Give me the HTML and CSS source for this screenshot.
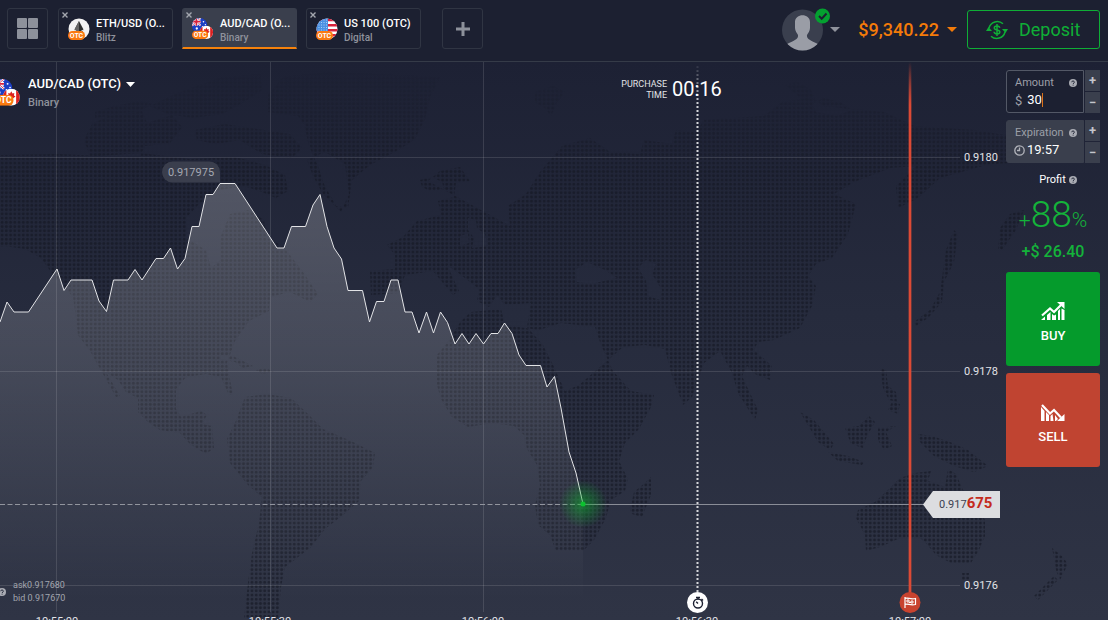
FILE: index.html
```html
<!DOCTYPE html>
<html lang="en">
<head>
<meta charset="utf-8">
<title>AUD/CAD (OTC)</title>
<link rel="stylesheet" href="styles.css">
</head>
<body>
<svg class="defs" width="0" height="0" aria-hidden="true">
  <defs>
    <clipPath id="round"><circle cx="11" cy="11" r="10.5"/></clipPath>
    <clipPath id="auClip"><circle cx="8" cy="8" r="8"/></clipPath>
    <clipPath id="caClip"><circle cx="15" cy="15" r="7"/></clipPath>
    <symbol id="badge" viewBox="0 0 17 9">
      <rect width="17" height="9" rx="4.5" fill="#fb7a10"/>
      <text x="8.5" y="7" text-anchor="middle" class="badge-text">OTC</text>
    </symbol>
    <symbol id="audcad" viewBox="0 0 23 23">
      <g clip-path="url(#auClip)">
        <rect width="16" height="16" fill="#1c3fc4"/>
        <path d="M0 0l9 8M9 0L0 8" stroke="#fff" stroke-width="2"/>
        <path d="M4.500 0v8M0 4h9" stroke="#fff" stroke-width="3"/>
        <path d="M4.500 0v8M0 4h9" stroke="#d8223c" stroke-width="1.600"/>
        <path d="M0 0l9 8M9 0L0 8" stroke="#d8223c" stroke-width=".7"/>
        <circle cx="12" cy="4" r=".8" fill="#fff"/><circle cx="14" cy="7" r=".7" fill="#fff"/><circle cx="5" cy="11" r="1.200" fill="#fff"/><circle cx="11" cy="9" r=".7" fill="#fff"/>
      </g>
      <g clip-path="url(#caClip)">
        <rect x="8" y="8" width="14" height="14" fill="#fff"/>
        <path d="M8 8h3v14H8zM19 8h3v14h-3z" fill="#dd2020"/>
        <path d="M15 10l1 2 1.500-.5-.3 2 1.300.8-2.500 2h-2l-2.500-2 1.300-.8-.3-2L14 12z" fill="#dd2020"/>
      </g>
      <use href="#badge" x="0" y="13" width="17" height="9"/>
    </symbol>
    <symbol id="help" viewBox="0 0 8 8">
      <circle cx="4" cy="4" r="4" fill="#a9abb3"/>
      <path d="M2.700 3.200c0-1.700 2.700-1.600 2.700 0 0 .8-1.300.9-1.300 1.800M4.100 5.700v.9" fill="none" stroke="#262b3c" stroke-width="1"/>
    </symbol>
  </defs>
</svg>

<header class="topbar">
  <button class="square" aria-label="Layout">
    <svg width="21" height="21" viewBox="0 0 21 21" fill="#8d919b"><rect width="10" height="10" rx="1"/><rect x="11" width="10" height="10" rx="1"/><rect y="11" width="10" height="10" rx="1"/><rect x="11" y="11" width="10" height="10" rx="1"/></svg>
  </button>
  <nav class="tabs">
    <div class="tab">
      <button class="tab-main">
        <svg width="22" height="22" viewBox="0 0 22 22"><circle cx="11" cy="11" r="10.5" fill="#f3f3f3"/><path d="M11 3l4.500 8.500L11 14l-4.500-2.500z" fill="#2f3030"/><path d="M11 3v11l-4.500-2.500z" fill="#666"/><path d="M6.500 12.500L11 15l4.500-2.500L11 19z" fill="#444"/><use href="#badge" x="0" y="13" width="17" height="9"/></svg>
        <span class="tab-label"><span class="tab-name">ETH/USD (O...</span><span class="tab-kind">Blitz</span></span>
      </button>
      <button class="close" aria-label="Close ETH/USD"><svg width="6" height="6" viewBox="0 0 6 6"><path d="M.5.5l5 5M5.500.5l-5 5" stroke="#a4a7af" stroke-width="1.400"/></svg></button>
    </div>
    <div class="tab active">
      <button class="tab-main">
        <svg width="22" height="22"><use href="#audcad"/></svg>
        <span class="tab-label"><span class="tab-name">AUD/CAD (O...</span><span class="tab-kind">Binary</span></span>
      </button>
      <button class="close" aria-label="Close AUD/CAD"><svg width="6" height="6" viewBox="0 0 6 6"><path d="M.5.5l5 5M5.500.5l-5 5" stroke="#a4a7af" stroke-width="1.400"/></svg></button>
    </div>
    <div class="tab">
      <button class="tab-main">
        <svg width="22" height="22" viewBox="0 0 22 22"><g clip-path="url(#round)"><rect width="22" height="22" fill="#fff"/><path d="M0 2h22M0 7.200h22M0 12.200h22M0 17.200h22" stroke="#d8223c" stroke-width="2.500"/><rect width="12" height="13" fill="#4a90e2"/><path d="M0 2h12M0 4.500h12M0 7h12M0 9.500h12M0 12h12" stroke="#a9cff5" stroke-width="1" stroke-dasharray="1 1.500"/></g><use href="#badge" x="0" y="13" width="17" height="9"/></svg>
        <span class="tab-label"><span class="tab-name">US 100 (OTC)</span><span class="tab-kind">Digital</span></span>
      </button>
      <button class="close" aria-label="Close US 100"><svg width="6" height="6" viewBox="0 0 6 6"><path d="M.5.5l5 5M5.500.5l-5 5" stroke="#a4a7af" stroke-width="1.400"/></svg></button>
    </div>
  </nav>
  <button class="square add" aria-label="Add asset"><svg width="14" height="14" viewBox="0 0 14 14"><path d="M7 0v14M0 7h14" stroke="#8d919b" stroke-width="3"/></svg></button>
  <div class="account">
    <button class="profile" aria-label="Profile">
      <svg width="48" height="44" viewBox="0 0 48 44">
        <clipPath id="av"><circle cx="20.5" cy="22" r="20.5"/></clipPath>
        <circle cx="20.5" cy="22" r="20.5" fill="#3a3f4e"/>
        <path clip-path="url(#av)" d="M13 14c0-9 15-9 15 0v6c0 3-2 5-3 7-.5 4 3 5 11 9v8H5v-8c8-4 11.500-5 11-9-1-2-3-4-3-7z" fill="#9a9da6"/>
        <circle cx="40.500" cy="8" r="7.500" fill="#04a030"/><path d="M37 8l2.700 2.700L44.500 5.500" fill="none" stroke="#1c2031" stroke-width="2"/>
      </svg>
      <svg width="10" height="5" viewBox="0 0 10 5"><path d="M0 0h10L5 5z" fill="#8f929c"/></svg>
    </button>
    <button class="balance">$9,340.22<svg width="10" height="5" viewBox="0 0 10 5"><path d="M0 0h10L5 5z" fill="#f47b09"/></svg></button>
    <button class="deposit">
      <svg width="22" height="20" viewBox="0 0 22 20" fill="none" stroke="#0fae36" stroke-width="1.500">
        <path d="M3 8a8.500 8.500 0 0 1 14-4.200M19 12a8.500 8.500 0 0 1-14 4.200"/>
        <path d="M0 11l2.500-4L6 11zM16 9l3.500 4L22 9z" fill="#0fae36" stroke="none"/>
        <path d="M13.700 7.800c-.3-2.600-5.400-2.400-5.400.1 0 2.800 5.500 1.400 5.500 4.100 0 2.500-5.500 2.700-5.700-.2M11 4v12"/>
      </svg>Deposit</button>
  </div>
</header>

<main class="stage">
  <svg class="chart" viewBox="0 62 1108 558" preserveAspectRatio="xMinYMin slice" role="img" aria-label="AUD/CAD price chart">
    <defs>
      <pattern id="dots" width="4.235" height="4.235" patternUnits="userSpaceOnUse"><circle cx="2.100" cy="2.100" r="1.450" fill="#151824"/></pattern>
      <linearGradient id="fade" gradientUnits="userSpaceOnUse" x1="0" y1="62" x2="0" y2="170"><stop offset="0" stop-color="#fff" stop-opacity="0"/><stop offset="1" stop-color="#fff"/></linearGradient>
      <mask id="top"><rect y="62" width="1108" height="558" fill="url(#fade)"/></mask>
      <linearGradient id="area" gradientUnits="userSpaceOnUse" x1="0" y1="183" x2="0" y2="600"><stop offset="0" stop-color="#fff" stop-opacity=".22"/><stop offset=".5" stop-color="#fff" stop-opacity=".12"/><stop offset="1" stop-color="#fff" stop-opacity="0"/></linearGradient>
      <radialGradient id="glow"><stop offset="0" stop-color="#0cb52d" stop-opacity=".55"/><stop offset="1" stop-color="#0cb52d" stop-opacity="0"/></radialGradient>
      <linearGradient id="red" gradientUnits="userSpaceOnUse" x1="0" y1="62" x2="0" y2="105"><stop offset="0" stop-color="#dc4a35" stop-opacity="0"/><stop offset="1" stop-color="#dc4a35"/></linearGradient>
      <linearGradient id="deadline" gradientUnits="userSpaceOnUse" x1="0" y1="62" x2="0" y2="105"><stop offset="0" stop-color="#d5d6da" stop-opacity="0"/><stop offset="1" stop-color="#d5d6da"/></linearGradient>
    </defs>
    <g mask="url(#top)"><path class="land" fill="url(#dots)" fill-rule="evenodd" d="
      M268 95l15-18 47-5 110 5-10 20-5 22-10 20-15 10-30 16-18 15-4 28-12-2-12-22-6-18-9-20-5-22-6-8-30-4z
      M84 140l8-16 20-10 30-3 5 12 25-8 10 12-12 16-25 3-5 10-30 2-20-2z
      M95 118l0-6 20-6 25-5 12 3-14 8-30 4z M150 106l30-14 40-14 40-4 2 16-18 12-22 12-30 4-24-4z
      M195 130l30-6 25 4 40 6 12 14-10 10-30-4-22-14-25 4-18-4z
      M0 155l60-1 40 2 40-3 50 6 45-2 30 8 20 10 3 16-12 7-14-6-18-6-25 4-20 14-13 14v20l20 12 5 18 10-8-1-22 10-24 18-4 16 10 3 18 16 8 20 26 15 22-8 8-20-10-20 5-1 14-20 10-14 20-8 22 4 22 2 9-4 1-8-18-15-3-20 3-10 12v20l5 8 20-6 6 4-5 9 10 2 2 22-8 6-16-10-10-11-20-3-12-8-10-10v-14l-12-6-8-12-12-8 14 24-4 1-26-46-12-16-2-18-3-20-22-25-10-14-16-9-20-3-20 3z
      M219 355l14 1 20 10-10 2-8-6-14-3z M256 370l10-2 8 4-12 2z M307 160l18-8 20 12 4 30-8 18-18-18-10-18z
      M245 397l22-3 24 4 16 15 16 16 28 12 24 12-2 14-12 14-2 20-16 14-18 14-14 18-18 14-8 6-4 20-3 32h-34l4-36 4-30 7-30 3-26-14-12-18-22-3-24 8-16z
      M420 180l12-3 10 5 2 7-14 2-8-4z M468 218l8 2 1 8 8 6 3 12-16 2 2-10-6-8z M460 236l8-3 1 10-9 3z
      M535 92l18-6 12 6-8 10-6 14-6-8-10-6z M785 85l12-3 14 8 4 10-14-2z M812 104l12-6 16 4 12 8-16 6-20-4z
      M510 226l-2-20 18-12 14-22 22-26 28-8 20 14 30 2 4-14 28 4 4-14 20 2 8-12 60-4 18-14 30-4 12 8 60 6 30 14 60 4 62 10v22l-46 2-50 14-22 20-20 10-2-22 20-20-26 2-36 14-20 12 22 10-8 30-16 24-16 6-8 12 8 10-4 20-12 22-26 12-16 2-4 8 18 16-2 14-15-6-8-8-5 10 16 34-3 10-17-27-6-20-12-22-16 12-12 34-9 8-12-32-6-24-20-4-22 2-16 14-28 24-14 6-12-26-10-20-16-18 4-24-26 2-8-10-8 12-12-6 2-12-18-14-14-10 12 26-6 4-20-24-28 4-6 18-28 2-1-24 25-2v-14l-8-10 16-8 14-16 24-6-3-14 16-4 2-14 14-2-10-14-20 4-12 10z
      M575 270l12-8 18 8 12 8-26 6-14-2z M638 268l8-8 10 4-4 10 10 16-2 10-12-4-2-16z
      M437 385v-30l10-12 14-22 10-9 30-3 4 16 34 5 22-7 34 4 6 18 12 26 18 20 23 4-3 12-12 22-14 14-6 18 9 18-3 12-14 9-5 18-12 22-10 10-28 1-6-16-12-10-3-20 5-20-3-20-10-16-3-14-10-9-22-3-24 4-16-10-11-18z
      M630 510l4-18 12-10 5-5v18l-9 22-10-3z
      M800 412l14 8 20 24-4 6-12-8z M828 452l20 4 16 6-2 3-24-4z M845 428l14-2 10-10 6 6-8 14-4 12-12-4z M878 428l18-2-10 6 6 14-8 4-6-10z M880 368l6 2 2 16 8 6 1 10-8-2-6-12z M892 402l8 2-2 10-10-4z
      M918 434l14 2 18 6 18 8 20 16-14 6-20-6-20-10-14-14z
      M946 250l8-20 4 4-4 28-10 20-2 20-14 16-12 8-2-4 16-12 10-18z
      M998 250l2-22 10-14 14-4-8 20-14 20z
      M856 518l2-8 17-8 15-14 10-10 15-5 16-2-3 10 17 6 3-18 8 5 7 16 13 16 9 14v16l-6 14-8 13h-20l-15-8-11-13-5-4h-20l-20 9-14 4-1-16z M962 573h7v7h-7z
      M1052 548l10 8 6 8-8 16-4-10-2-12z M1054 576l4 4-20 20-4-4z"/></g>
    <g class="grid">
      <path d="M56.500 62v550M270.500 62v550M483.500 62v550M0 157.500h960M0 371.500h960M0 585.500h960"/>
    </g>
    <path fill="url(#area)" d="M0 322L7 302 14 312H28.500L57 269 64 290.500 71 280H92L99 301 106.500 311.500 113.500 280H128L135 269.500 142 280 156 258.500H163.500L170.500 248 177.500 269 185 258.500 192 226.500H199L206 194.500H213L220 183.500H235L277 248H284L291.500 226.500H305.500L313 205 320 194.500 327 226.500 334 248 341.500 259 348 290.500H362.500L369.500 322 376.500 301.500H384L391 280H398L405 312H412L419 333 426.500 312 433.500 333 440.500 312 447.500 322.500 455 344 462 333.500 469 344 476 333.500 483.500 344 491 333.500H498L504.500 323 512 333.500 519 355 526 365.500H540.500L547 387 554.500 376.500 561 408 569 452 576 473 583 504V620H0z"/>
    <path class="price-line" d="M0 322L7 302 14 312H28.500L57 269 64 290.500 71 280H92L99 301 106.500 311.500 113.500 280H128L135 269.500 142 280 156 258.500H163.500L170.500 248 177.500 269 185 258.500 192 226.500H199L206 194.500H213L220 183.500H235L277 248H284L291.500 226.500H305.500L313 205 320 194.500 327 226.500 334 248 341.500 259 348 290.500H362.500L369.500 322 376.500 301.500H384L391 280H398L405 312H412L419 333 426.500 312 433.500 333 440.500 312 447.500 322.500 455 344 462 333.500 469 344 476 333.500 483.500 344 491 333.500H498L504.500 323 512 333.500 519 355 526 365.500H540.500L547 387 554.500 376.500 561 408 569 452 576 473 583 504"/>
    <path d="M0 504.500h583" stroke="#92959e" stroke-dasharray="5 2.500"/>
    <path d="M583 504.500h341" stroke="#8a8d97"/>
    <circle cx="583" cy="504" r="24" fill="url(#glow)"/><circle cx="583" cy="504" r="2.500" fill="#0cc22f"/>
    <path d="M162 172a10.500 10.500 0 0 1 10.500-10.500h37A10.500 10.500 0 0 1 220 172v10.500h-47.500A10.500 10.500 0 0 1 162 172z" fill="#3a3e4d"/>
    <text class="peak" x="191" y="176" text-anchor="middle">0.917975</text>
    <path d="M697.500 66v526" stroke="url(#deadline)" stroke-width="2" stroke-dasharray="2 2"/>
    <rect x="908" y="62" width="4" height="540" fill="url(#red)" opacity=".35"/>
    <rect x="909" y="62" width="2" height="540" fill="url(#red)"/>
    <text class="caption" text-anchor="end"><tspan x="667" y="87">PURCHASE</tspan><tspan x="667" y="98">TIME</tspan></text>
    <text class="countdown" x="672" y="96">00:16</text>
    <circle cx="697.500" cy="602.500" r="10.500" fill="#fff"/>
    <g fill="none" stroke="#1c2031" stroke-width="1.400"><circle cx="698" cy="603.500" r="4.500"/><path d="M696 597.500h4M698 597.500v2M701.500 599l1.500 1.500M698 603.500l-1.800-1.800"/></g>
    <circle cx="910" cy="602.500" r="10.500" fill="#c8432f"/>
    <g fill="none" stroke="#fff" stroke-width="1.200"><path d="M905 597v11M905 598.500c3-1.500 5 1.500 10.500 0v6c-5.500 1.500-7.500-1.500-10.500 0"/><path d="M907 600h2v2h-2zM911 601h2v2h-2zM909 602.500h2" stroke-width="1"/></g>
    <g class="axis">
      <text x="964" y="161">0.9180</text><text x="964" y="375">0.9178</text><text x="964" y="589">0.9176</text>
      <g text-anchor="middle"><text x="57" y="625">10:55:00</text><text x="270" y="625">10:55:30</text><text x="483" y="625">10:56:00</text><text x="697" y="625">10:56:30</text><text x="910" y="625">10:57:00</text></g>
    </g>
    <path d="M923 504.500l10-13.500h67v27h-67z" fill="#dcdde0"/>
    <text class="tag" x="939" y="508">0.917<tspan class="tag-strong">675</tspan></text>
  </svg>

  <section class="info">
    <button class="asset">
      <svg width="20" height="30" viewBox="3 0 20 30"><svg x="-4" y="0" width="28" height="30" viewBox="0 0 23 23"><use href="#audcad"/></svg></svg>
      <span class="asset-label"><span class="asset-name">AUD/CAD (OTC)<svg width="9" height="5" viewBox="0 0 9 5"><path d="M0 0h9L4.500 5z" fill="#fff"/></svg></span><span class="asset-kind">Binary</span></span>
    </button>
    <div class="quotes">
      <svg width="6" height="8" viewBox="2 0 6 8"><svg width="8" height="8"><use href="#help"/></svg></svg>
      <p>ask0.917680<br>bid 0.917670</p>
    </div>
  </section>

  <aside class="panel">
    <div class="field focused">
      <div class="field-body">
        <div class="field-head"><label for="amount">Amount</label><svg width="8" height="8"><use href="#help"/></svg></div>
        <div class="field-value"><span class="currency">$</span><input id="amount" class="amount" type="text" value="30"><i class="cursor"></i></div>
      </div>
      <div class="steps"><button aria-label="Increase amount">+</button><button aria-label="Decrease amount">−</button></div>
    </div>
    <div class="field">
      <div class="field-body">
        <div class="field-head"><label for="expiry">Expiration</label><svg width="8" height="8"><use href="#help"/></svg></div>
        <div class="field-value time"><svg width="11" height="11" viewBox="0 0 11 11" fill="none" stroke="#b2b4bb" stroke-width="1.300"><circle cx="5.500" cy="5.500" r="4.700"/><path d="M5.500 2.500v3H3"/></svg><input id="expiry" type="text" value="19:57"></div>
      </div>
      <div class="steps"><button aria-label="Later expiration">+</button><button aria-label="Earlier expiration">−</button></div>
    </div>
    <div class="profit">
      <div class="profit-title">Profit<svg width="8" height="8"><use href="#help"/></svg></div>
      <div class="percent"><span>+</span>88<span>%</span></div>
      <div class="gain">+$ 26.40</div>
    </div>
    <button class="trade buy"><svg width="24" height="19" viewBox="0 0 24 19"><path d="M1 13.500l8-7 4 3.500 7-7" fill="none" stroke="#fff" stroke-width="2.200"/><path d="M16 0h7.500v7z" fill="#fff"/><path d="M0 18l4-3.500V18zM6 18v-5l3.500-3V18zM11 18v-6l2 1.500 2-1V18zM17 18V9l2-2v11zM20.500 18V6.500L23.500 8v10z" fill="#fff"/></svg>BUY</button>
    <button class="trade sell"><svg width="24" height="19" viewBox="0 0 24 19"><path d="M1 2l8 8.500L13 7l7 7.500" fill="none" stroke="#fff" stroke-width="2.200"/><path d="M23.500 11v7H16z" fill="#fff"/><path d="M0 18V4l3.500 4v10zM5 18V9l3 3v6zM9.500 18v-5l2-2 1 7zM14 18v-6l3 4-2 2z" fill="#fff"/></svg>SELL</button>
  </aside>
</main>
</body>
</html>
```

FILE: styles.css
```css
* { box-sizing: border-box; }

body {
  margin: 0;
  height: 100vh;
  display: flex;
  flex-direction: column;
  overflow: hidden;
  background: #1c2031;
  color: #fff;
  font-family: Roboto, "Liberation Sans", sans-serif;
}

button, input {
  margin: 0;
  padding: 0;
  border: 0;
  background: none;
  color: inherit;
  font: inherit;
}

svg { flex: none; }
.defs { position: absolute; }
.badge-text { font-size: 7px; font-weight: 700; fill: #fff; }

.topbar {
  flex: none;
  display: flex;
  align-items: flex-start;
  height: 62px;
  padding: 8px 8px 0 7px;
  border-bottom: 1px solid #353b48;
}

.square {
  display: flex;
  align-items: center;
  justify-content: center;
  width: 41px;
  height: 41px;
  border: 1px solid #303543;
  border-radius: 3px;
}

.add { margin-left: 21px; }

.tabs { display: flex; gap: 9px; margin-left: 10px; }

.tab {
  position: relative;
  width: 115px;
  height: 41px;
  border: 1px solid #303543;
  border-radius: 3px;
}

.tab.active {
  background: #3a3f4d;
  border-color: #3a3f4d;
  border-bottom: 2px solid #f6820c;
  border-radius: 3px 3px 0 0;
}

.tab-main {
  display: flex;
  align-items: flex-start;
  gap: 6px;
  width: 100%;
  padding: 8px 0 0 9px;
  text-align: left;
}

.tab-main svg { margin-top: 1px; }
.tab-label { display: flex; flex-direction: column; white-space: nowrap; }
.tab-name { font-size: 11px; line-height: 14px; font-weight: 500; }
.tab-kind { font-size: 10px; line-height: 14px; color: #8f929c; font-weight: 500; }

.close {
  position: absolute;
  top: 3px;
  left: 3px;
  width: 6px;
  height: 6px;
  display: flex;
}

.account { display: flex; align-items: flex-start; margin-left: auto; }

.profile { display: flex; align-items: center; height: 43px; }

.balance {
  display: flex;
  align-items: center;
  gap: 8px;
  height: 42px;
  margin: 0 10px 0 18px;
  color: #f47b09;
  font-size: 18px;
  font-weight: 500;
}

.deposit {
  display: flex;
  align-items: center;
  gap: 11px;
  width: 133px;
  height: 39px;
  margin-top: 2px;
  padding-left: 18px;
  border: 1px solid #0fae36;
  border-radius: 3px;
  color: #0fae36;
  font-size: 18px;
}

.stage {
  position: relative;
  flex: 1;
  min-height: 0;
  display: flex;
  justify-content: space-between;
  overflow: hidden;
  background: linear-gradient(#1d2134, #262b3d 45%, #2f3445);
}

.chart { position: absolute; inset: 0; width: 100%; height: 100%; }
.land { opacity: .65; }
.grid path { fill: none; stroke: #fff; stroke-opacity: .12; }
.price-line { fill: none; stroke: #e2e3e6; stroke-width: 1; }
.chart text { fill: #e2e3e7; font-size: 11px; }
.chart .peak { fill: #a5a8b1; }
.chart .caption { font-size: 9px; }
.chart .countdown { fill: #fff; font-size: 20px; }
.chart .tag { fill: #3d4150; }
.chart .tag-strong { fill: #c42a1c; font-size: 15px; font-weight: 700; }

.info {
  position: relative;
  display: flex;
  flex-direction: column;
  justify-content: space-between;
  padding: 14px 0 15px;
}

.asset { display: flex; gap: 8px; text-align: left; }
.asset > svg { margin-top: 2px; }
.asset-label { display: flex; flex-direction: column; gap: 3px; }
.asset-name { display: flex; align-items: center; gap: 5px; font-size: 13px; line-height: 16px; font-weight: 500; }
.asset-kind { font-size: 11px; line-height: 16px; color: #8f929c; font-weight: 500; }

.quotes { display: flex; align-items: center; gap: 7px; color: #a2a5ae; }
.quotes p { margin: 0; font-size: 9px; line-height: 13px; }

.panel {
  position: relative;
  width: 94px;
  margin: 8px 8px 0 0;
  display: flex;
  flex-direction: column;
  align-items: stretch;
  gap: 7px;
}

.field { display: flex; gap: 1px; height: 43px; }

.field-body {
  flex: 1;
  min-width: 0;
  padding: 5px 6px 0 8px;
  border: 1px solid #3a3f4d;
  border-radius: 3px 0 0 3px;
  background: #3a3f4d;
}

.focused .field-body { background: #1c2031; border-color: #535866; }

.field-head {
  display: flex;
  align-items: center;
  justify-content: space-between;
  font-size: 11px;
  line-height: 14px;
  color: #9c9fa8;
}

.field-value { display: flex; align-items: center; gap: 5px; height: 20px; font-size: 13px; }
.field-value.time { gap: 2px; margin-left: -1px; }
.currency { color: #9c9fa8; }
.field-value input { width: 100%; min-width: 0; line-height: 16px; }
.field-value .amount { width: 15px; }
.cursor { width: 1px; height: 14px; margin-left: -5px; background: #d9731c; }

.steps { display: flex; flex-direction: column; gap: 1px; width: 15px; }
.steps button {
  flex: 1;
  background: #3a3f4d;
  color: #c4c6cc;
  font-size: 13px;
  font-weight: 700;
  line-height: 20px;
}

.profit { display: flex; flex-direction: column; align-items: center; margin-bottom: 3px; }
.profit-title { display: flex; gap: 3px; align-items: center; padding: 3px 0 0 10px; font-size: 11px; line-height: 14px; }

.percent {
  display: flex;
  align-items: baseline;
  margin-top: 6px;
  color: #14b33a;
  font-size: 37px;
  line-height: 44px;
  font-weight: 300;
}

.percent span { font-size: 21px; }
.gain { color: #14b33a; font-size: 16px; line-height: 20px; font-weight: 500; }

.trade {
  display: flex;
  flex-direction: column;
  align-items: center;
  gap: 7px;
  height: 94px;
  padding-top: 30px;
  border-radius: 3px;
  font-size: 13px;
  line-height: 16px;
  font-weight: 500;
}

.buy { background: #059b2c; }
.sell { background: #c04431; }
```
